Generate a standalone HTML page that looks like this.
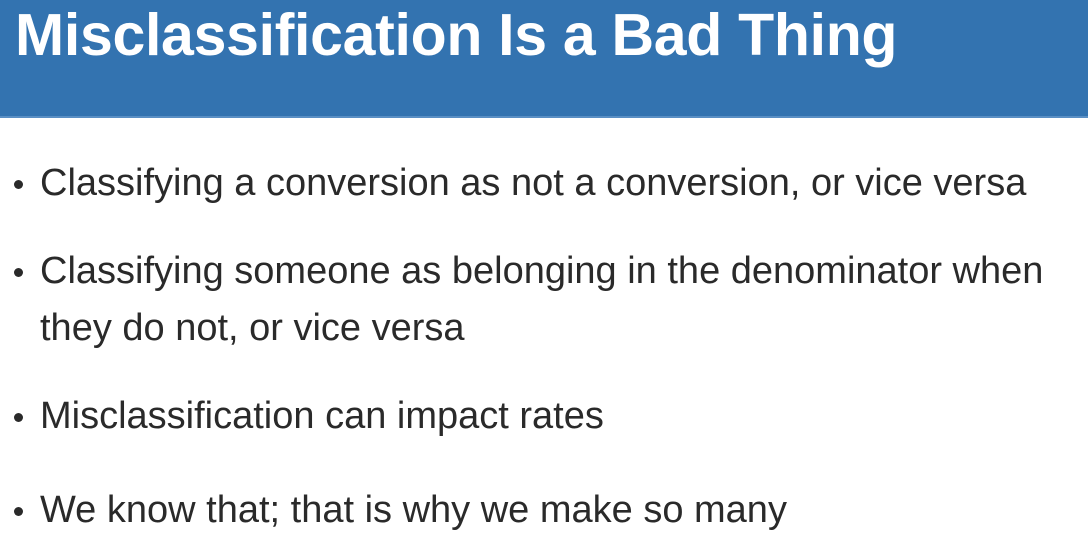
<!DOCTYPE html>
<html><head><style>
html,body{margin:0;padding:0;width:1088px;height:550px;overflow:hidden;background:#fff;font-family:"Liberation Sans",sans-serif;}
.hdr{position:absolute;left:0;top:0;width:1088px;height:116px;background:#3373b0;border-bottom:2px solid #5a8fc4;}
.title{position:absolute;left:15px;top:3px;color:#fff;font-weight:bold;font-size:59px;line-height:64px;white-space:nowrap;letter-spacing:-0.3px;}
.b{position:absolute;left:0;color:#2a2a2a;font-size:38px;line-height:57px;white-space:nowrap;}
.b span.d{position:absolute;left:14px;top:25px;width:9px;height:9px;border-radius:50%;background:#2a2a2a;}
.b .t{position:absolute;left:40px;top:0;}
</style></head><body>
<div class="hdr"><div class="title">Misclassification Is a Bad Thing</div></div>
<div class="b" style="top:155px"><span class="d"></span><span class="t">Classifying a conversion as not a conversion, or vice versa</span></div>
<div class="b" style="top:243px"><span class="d"></span><span class="t">Classifying someone as belonging in the denominator when<br>they do not, or vice versa</span></div>
<div class="b" style="top:388px"><span class="d"></span><span class="t">Misclassification can impact rates</span></div>
<div class="b" style="top:482px"><span class="d"></span><span class="t">We know that; that is why we make so many</span></div>
</body></html>
